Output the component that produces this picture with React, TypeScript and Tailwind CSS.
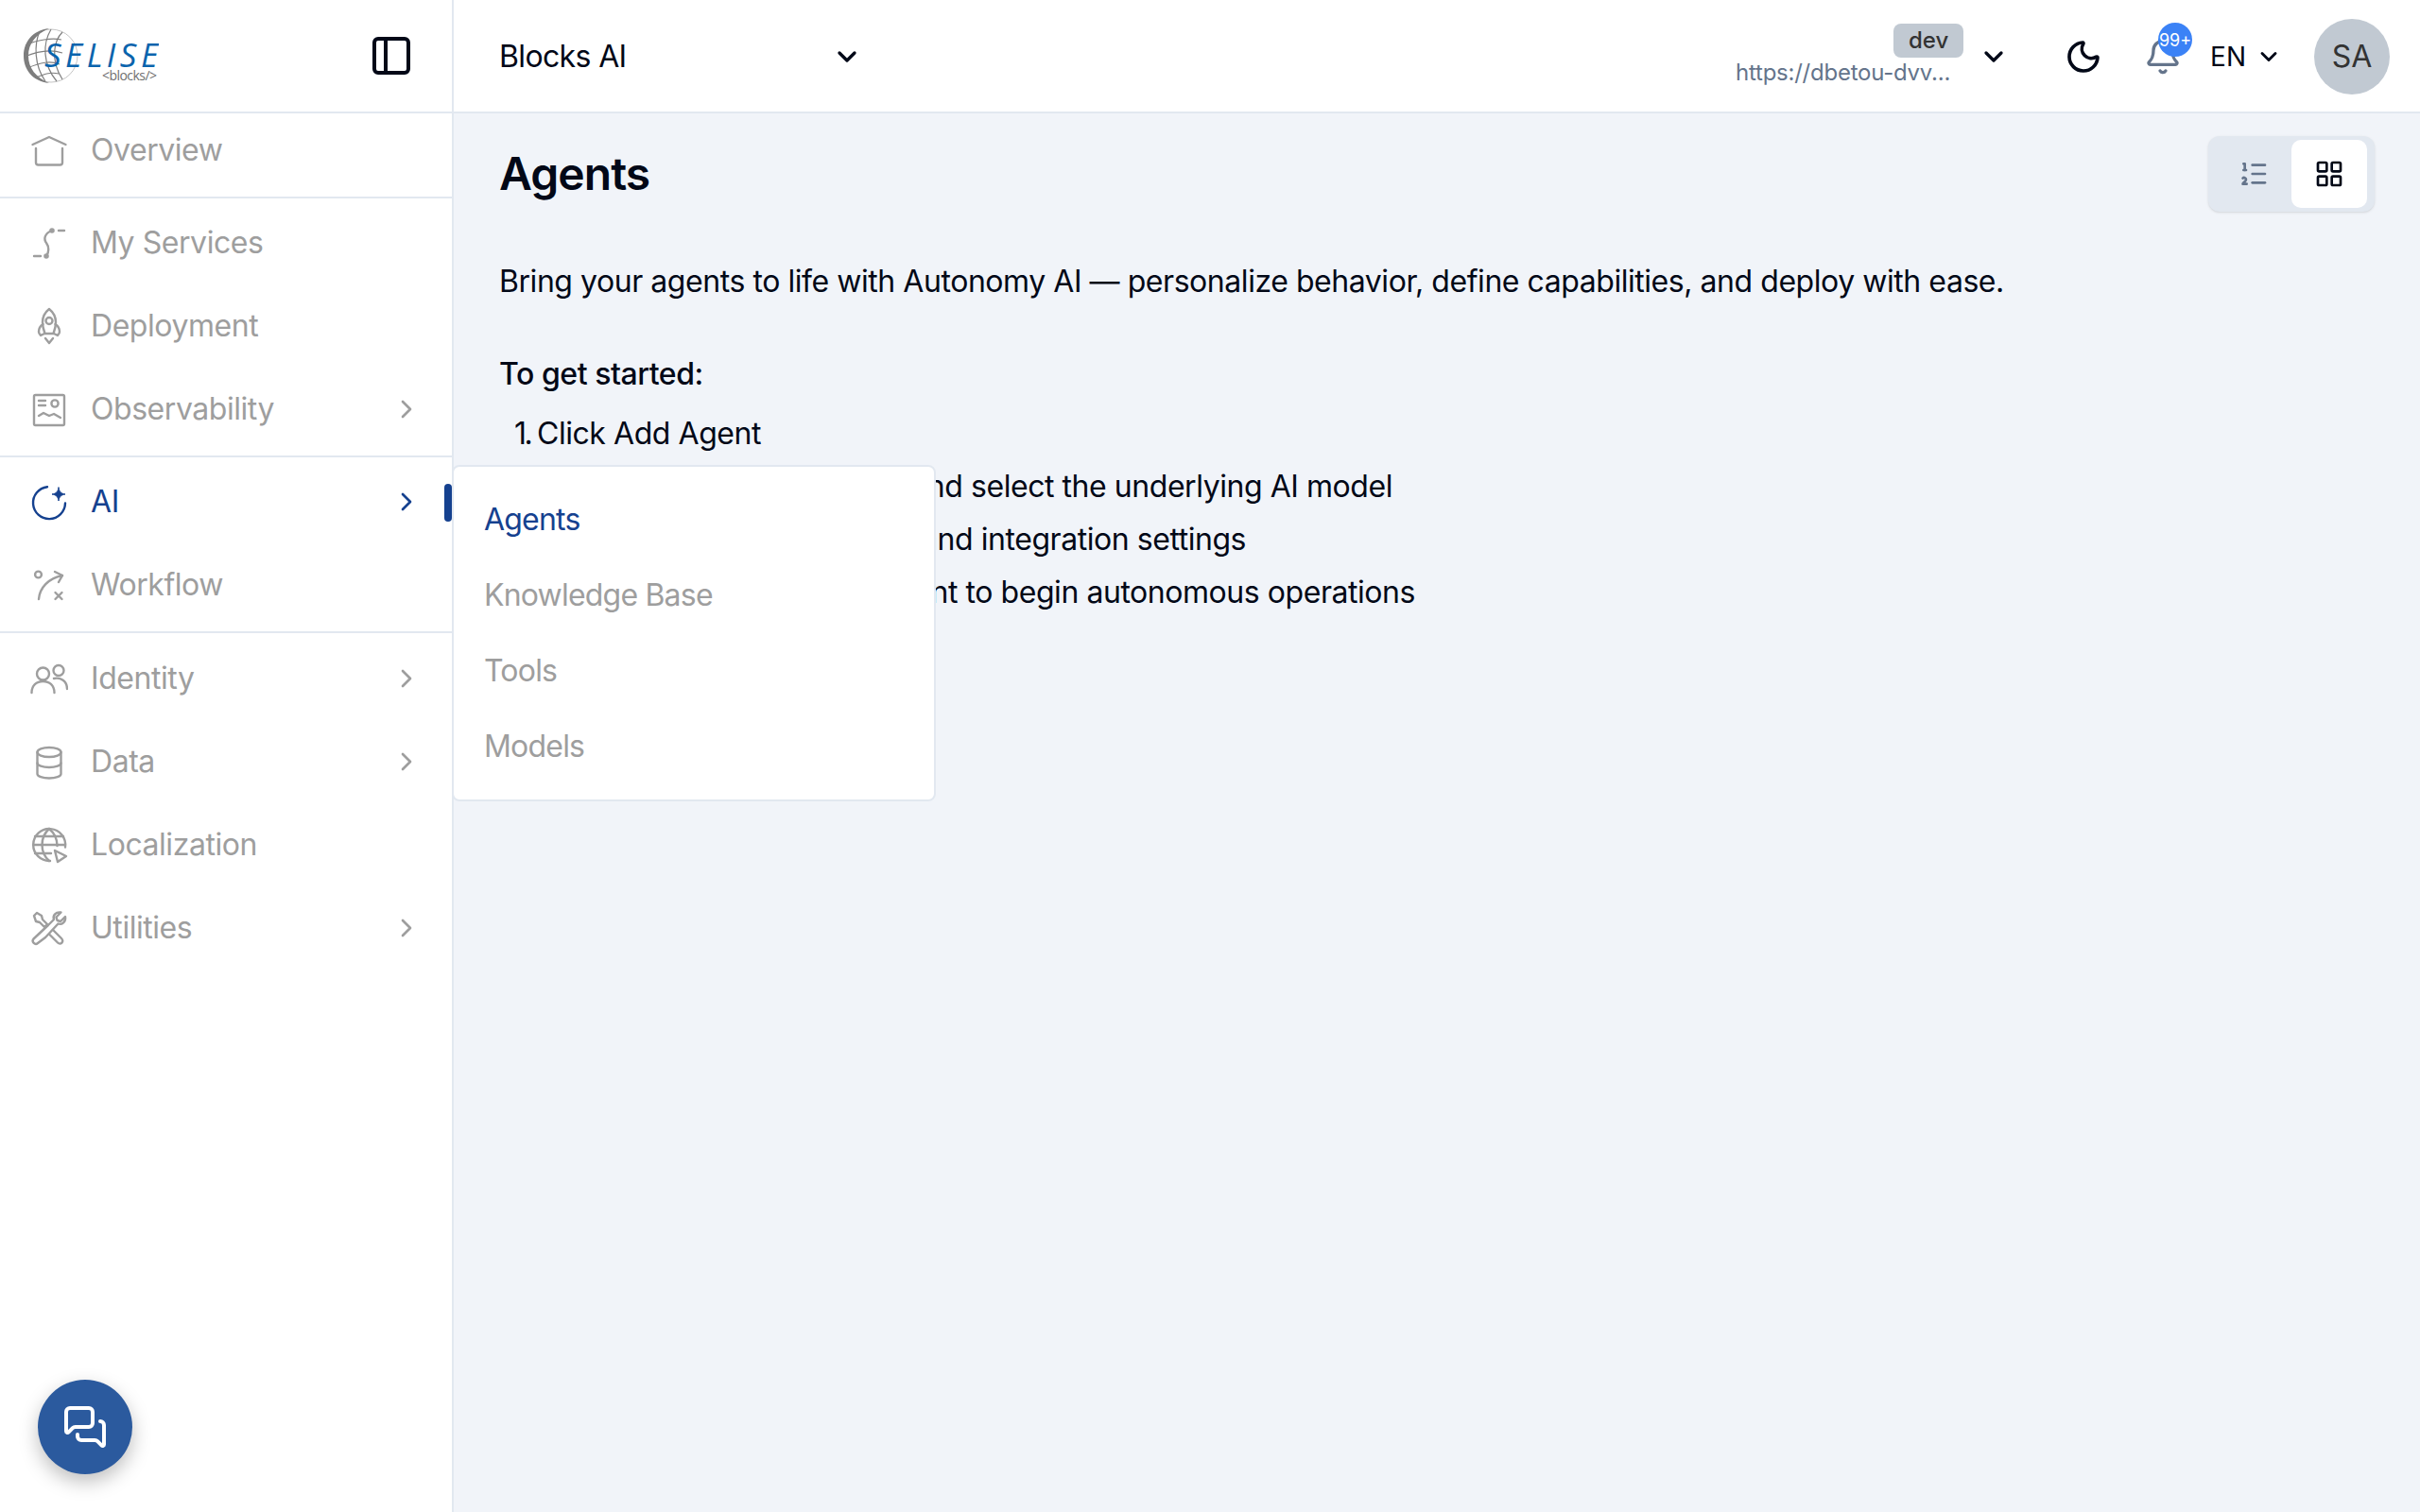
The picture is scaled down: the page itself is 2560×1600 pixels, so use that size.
import { ChevronDown, ChevronRight, Bell, LayoutGrid, ListOrdered, MessagesSquare, Moon, PanelLeft } from "lucide-react";
import type { ReactNode } from "react";

const Icon = ({ children }: { children: ReactNode }) => (
  <svg
    viewBox="0 0 40 40"
    fill="none"
    stroke="currentColor"
    strokeWidth="2.4"
    strokeLinecap="round"
    strokeLinejoin="round"
    className="w-10 h-10 shrink-0"
  >
    {children}
  </svg>
);

const HomeIcon = () => (
  <Icon>
    <path d="M2.5 14 20 6l17.5 8" />
    <path d="M6 18v15a2.5 2.5 0 0 0 2.5 2.5h23a2.5 2.5 0 0 0 2.5-2.5V18" />
  </Icon>
);
const ServicesIcon = () => (
  <Icon>
    <path d="M30 7h6M4 34h7" />
    <path d="M23 7c-8 3-9 9-6 13s3 10 0 14" />
    <circle cx="23" cy="7" r="1.6" fill="currentColor" />
    <circle cx="17" cy="34" r="1.6" fill="currentColor" />
  </Icon>
);
const RocketIcon = () => (
  <Icon>
    <path d="M20 2c-5 4-7 9-7 14 0 4 1 8 2.500 12h9c1.500-4 2.500-8 2.500-12 0-5-2-10-7-14z" />
    <circle cx="20" cy="14.500" r="3.500" />
    <path d="M13.500 18c-3 2-4.500 5-4.500 8 0 2 1 3 2 4l4-2M26.500 18c3 2 4.500 5 4.500 8 0 2-1 3-2 4l-4-2" />
    <path d="M16 33l4 5 4-5" />
  </Icon>
);
const ObservabilityIcon = () => (
  <Icon>
    <rect x="4" y="5" width="32" height="32" rx="1.500" />
    <path d="M9 11h7M9 16h7" />
    <circle cx="26" cy="14" r="3.600" />
    <path d="M9 27l5-3 6 3 5-2 7 4" />
  </Icon>
);
const AiIcon = () => (
  <Icon>
    <path d="M18 4.200A17 17 0 1 0 37 21.500" />
    <path
      d="M30 5c.7 4.500 2.500 6.300 7 7-4.500.7-6.300 2.500-7 7-.7-4.500-2.500-6.300-7-7 4.500-.7 6.300-2.500 7-7z"
      fill="currentColor"
      strokeWidth="1"
    />
  </Icon>
);
const WorkflowIcon = () => (
  <Icon>
    <circle cx="8.500" cy="9" r="3.400" />
    <path d="M9 35c1-12 10-22 25-25" />
    <path d="M26 6l8 4-4 7" />
    <path d="M26.500 28l7 7M33.500 28l-7 7" />
  </Icon>
);
const IdentityIcon = () => (
  <Icon>
    <circle cx="13.500" cy="15" r="6.500" />
    <circle cx="30" cy="11.500" r="5.500" />
    <path d="M1.500 35c0-7.500 5-12 12-12s12 4.500 12 12" />
    <path d="M25 20c7-1.500 14 2.500 14 11" />
  </Icon>
);
const DataIcon = () => (
  <Icon>
    <ellipse cx="20" cy="10" rx="12.500" ry="5" />
    <path d="M7.500 10v23c0 2.500 5.500 4.500 12.500 4.500s12.500-2 12.500-4.500V10" />
    <path d="M7.500 21.500c0 2.500 5.500 4.500 12.500 4.500s12.500-2 12.500-4.500" />
  </Icon>
);
const GlobeIcon = () => (
  <Icon>
    <path d="M37 22.500A17 17 0 1 0 21 37" />
    <path d="M3 20h34M5 11h30M5 29h17" />
    <path d="M20 3c-10 9-10 25 0 34M20 3c6 5 8.500 11 8.500 18" />
    <path d="M26 26l12 6-9 6z" />
  </Icon>
);
const UtilitiesIcon = () => (
  <Icon>
    <path d="M4 7l3-3 5 3 1 4 5 5-3 3-5-5-4-1z" />
    <path d="M24 22l9 9c3.500 3.500-1 7.500-4 4.500l-9-9" />
    <path d="M19 17l6-6c-1.500-4 2-8.500 7.500-7.500l-5 5 1 3.500 3.500 1 5-5c1 5.500-3.500 9-7.500 7.500L16 30l-8 6c-3 2.500-7-1.500-4.500-4.500z" />
  </Icon>
);

const Logo = () => (
  <svg viewBox="0 0 144 62" className="w-36 h-[62px]">
    <circle cx="30" cy="31" r="28" fill="none" stroke="#b5b5b5" strokeWidth="0.800" />
    <path d="M28 2C10 4 1 17 1 31s9 27 27 29C14 54 6 44 6 31S14 8 28 2z" fill="#7d7d7d" />
    <g fill="none" stroke="#7f7f7f" strokeWidth="1.200">
      <path d="M18 5c-6 14-6 36 6 53M30 3c-9 15-9 37 6 55M42 6c-8 8-14 28 0 50" />
      <path d="M3 20c12-6 28-8 38-6M2 32c14-6 28-8 40-4M5 44c14-6 24-8 34-4M14 54c10-4 16-6 24-4" />
    </g>
    <text
      x="23"
      y="43"
      fill="#0a64ad"
      fontFamily="'Open Sans', sans-serif"
      fontStyle="italic"
      fontSize="35"
      textLength="120"
    >
      SELISE
    </text>
    <text x="84" y="57" fill="#6f6f6f" fontFamily="'Open Sans', sans-serif" fontSize="14" textLength="58">
      {"<blocks/>"}
    </text>
  </svg>
);

const NavItem = ({
  icon,
  label,
  arrow,
  active,
}: {
  icon: ReactNode;
  label: string;
  arrow?: boolean;
  active?: boolean;
}) => (
  <div
    className={
      active
        ? "relative flex items-center h-[88px] pl-8 pr-[32px] text-[#15418f]"
        : "relative flex items-center h-[88px] pl-8 pr-[32px] text-[#9e9e9e]"
    }
  >
    {icon}
    <span className="ml-[24px] flex-1 text-[32px] tracking-[-0.014em]">{label}</span>
    {arrow && <ChevronRight size={32} strokeWidth={2} />}
    {active && <div className="absolute right-0 top-[25px] w-2 h-10 rounded-full bg-[#15418f]" />}
  </div>
);

const Sidebar = () => (
  <aside className="w-[480px] shrink-0 h-full bg-white border-r-2 border-[#e2e8f0] flex flex-col relative">
    <div className="h-[120px] shrink-0 flex items-center justify-between pl-6 pr-[38px] border-b-2 border-[#e2e8f0]">
      <Logo />
      <PanelLeft size={48} strokeWidth={2} className="text-[#020817] mr-[2px]" />
    </div>
    <div className="h-[90px] shrink-0 border-b-2 border-[#e2e8f0]">
      <div className="-mt-[5px]">
        <NavItem icon={<HomeIcon />} label="Overview" />
      </div>
    </div>
    <div className="pt-[3px] pb-[5px] border-b-2 border-[#e2e8f0]">
      <NavItem icon={<ServicesIcon />} label="My Services" />
      <NavItem icon={<RocketIcon />} label="Deployment" />
      <NavItem icon={<ObservabilityIcon />} label="Observability" arrow />
    </div>
    <div className="pt-[3px] pb-[5px] border-b-2 border-[#e2e8f0]">
      <NavItem icon={<AiIcon />} label="AI" arrow active />
      <NavItem icon={<WorkflowIcon />} label="Workflow" />
    </div>
    <div className="pt-[4px]">
      <NavItem icon={<IdentityIcon />} label="Identity" arrow />
      <NavItem icon={<DataIcon />} label="Data" arrow />
      <NavItem icon={<GlobeIcon />} label="Localization" />
      <NavItem icon={<UtilitiesIcon />} label="Utilities" arrow />
    </div>
    <div className="mt-auto mb-10 ml-10 w-[100px] h-[100px] rounded-full bg-[#2b5a9e] text-white flex items-center justify-center shadow-[0_8px_20px_rgba(0,0,0,0.25)]">
      <MessagesSquare size={48} strokeWidth={2} />
    </div>

    {/* AI flyout */}
    <div className="absolute z-10 left-[478px] top-[492px] w-[512px] h-[356px] bg-white rounded-[8px] border-2 border-[#e2e8f0] pt-[16px] pl-[32px] text-[32px] tracking-[-0.025em]">
      <div className="h-20 flex items-center text-[#15418f]">Agents</div>
      <div className="h-20 flex items-center text-[#9e9e9e]">Knowledge Base</div>
      <div className="h-20 flex items-center text-[#9e9e9e]">Tools</div>
      <div className="h-20 flex items-center text-[#9e9e9e]">Models</div>
    </div>
  </aside>
);

const Header = () => (
  <header className="h-[120px] shrink-0 bg-white border-b-2 border-[#e2e8f0] flex items-center pl-12 pr-8 pt-[2px]">
    <div className="w-[384px] flex items-center justify-between">
      <span className="text-[32px] tracking-[-0.02em] text-[#020817]">Blocks AI</span>
      <ChevronDown size={32} strokeWidth={2.5} className="text-[#020817]" />
    </div>
    <div className="ml-auto flex items-center">
      <div className="flex flex-col items-end w-[228px]">
        <span className="h-9 w-[74px] -mr-[11px] -mt-[2px] rounded-[8px] bg-[#c1c9d2] text-[#333] text-[24px] font-medium flex items-center justify-center">
          dev
        </span>
        <span className="whitespace-nowrap text-[24px] leading-[32px] text-[#64748b] tracking-[-0.01em] mr-[3px]">
          https://dbetou-dvv...
        </span>
      </div>
      <ChevronDown size={32} strokeWidth={2.5} className="ml-[27px] text-[#020817]" />
      <Moon size={40} strokeWidth={2.2} className="ml-[59px] text-[#020817]" />
      <div className="relative ml-[44px]">
        <Bell size={40} strokeWidth={2} className="text-[#64748b]" />
        <span className="absolute -top-[16px] left-[15px] w-9 h-9 rounded-full bg-[#3b82f6] text-white text-[18px] flex items-center justify-center">
          99+
        </span>
      </div>
      <span className="ml-[30px] text-[28px] text-[#020817]">EN</span>
      <ChevronDown size={28} strokeWidth={2.5} className="ml-[10px] text-[#020817]" />
      <div className="ml-[34px] w-20 h-20 rounded-full bg-[#c1c9d2] text-[#333] text-[32px] flex items-center justify-center">
        SA
      </div>
    </div>
  </header>
);

const Step = ({ n, children }: { n: number; children: ReactNode }) => (
  <li className="flex">
    <span className="w-[24px] shrink-0 tracking-[-0.08em]">{n}.</span>
    <span>{children}</span>
  </li>
);

const Content = () => (
  <main className="flex-1 bg-[#f1f4f9] pl-12 pr-12 text-[#020817]">
    <div className="flex items-center justify-between pt-6">
      <h1 className="text-[48px] font-semibold tracking-[-0.02em]">Agents</h1>
      <div className="w-[176px] h-20 rounded-[12px] bg-[#e2e8f0] flex items-center pl-8 pr-2 justify-between shadow-sm">
        <ListOrdered size={32} className="text-[#64748b]" />
        <div className="w-20 h-[72px] rounded-[10px] bg-white flex items-center justify-center">
          <LayoutGrid size={32} />
        </div>
      </div>
    </div>
    <p className="mt-[50px] text-[32px] leading-[48px] tracking-[-0.014em]">
      Bring your agents to life with Autonomy AI — personalize behavior, define capabilities, and deploy with ease.
    </p>
    <p className="mt-[50px] text-[32px] leading-[48px] font-medium tracking-[-0.014em]">To get started:</p>
    <ol className="mt-[11px] pl-4 text-[32px] leading-[56px] tracking-[-0.014em]">
      <Step n={1}>Click Add Agent</Step>
      <Step n={2}>Give your AI agent a name and select the underlying AI model</Step>
      <Step n={3}>Configure tools, memories, and integration settings</Step>
      <Step n={4}>Save, then activate your agent to begin autonomous operations</Step>
    </ol>
  </main>
);

export default function App() {
  return (
    <div className="w-[2560px] h-[1600px] flex overflow-hidden bg-white font-['Inter',sans-serif]">
      <Sidebar />
      <div className="flex-1 flex flex-col min-w-0">
        <Header />
        <Content />
      </div>
    </div>
  );
}
